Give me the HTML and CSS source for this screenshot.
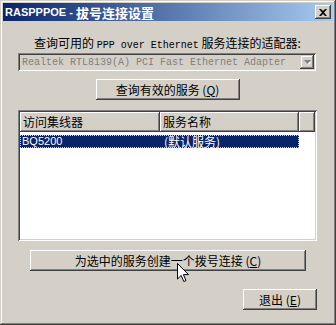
FILE: index.html
```html
<!DOCTYPE html>
<html>
<head>
<meta charset="utf-8">
<link rel="stylesheet" href="styles.css">
</head>
<body>
<div class="window">
  <div class="titlebar">
    <span class="title"><span class="t-latin">RASPPPOE - </span><span class="t-cjk">拔号连接设置</span></span>
    <span class="close"><svg width="8" height="7" viewBox="0 0 8 7"><path d="M0 0h2l2 2l2-2h2l-3 3.5l3 3.5h-2l-2-2l-2 2h-2l3-3.5z" fill="#000"/></svg></span>
  </div>
  <div class="content">
    <div class="label">查询可用的 <span class="mono">PPP over Ethernet</span> 服务连接的适配器:</div>
    <div class="combo">
      <span class="mono combo-text">Realtek RTL8139(A) PCI Fast Ethernet Adapter</span>
      <span class="drop"><svg width="7" height="5" viewBox="0 0 7 5"><path d="M1 1h5l-2.5 3z" fill="#fff" transform="translate(1 1)"/><path d="M0 0h7l-3.5 4z" fill="#808080"/></svg></span>
    </div>
    <div class="btn btn-query">查询有效的服务 (<u>Q</u>)</div>
    <div class="list">
      <div class="list-head">
        <div class="hcol c1">访问集线器</div>
        <div class="hcol c2">服务名称</div>
        <div class="hcol c3"></div>
      </div>
      <div class="row selected">
        <span class="cell c1">BQ5200</span>
        <span class="cell c2">(默认服务)</span>
      </div>
    </div>
    <div class="btn btn-create">为选中的服务创建一个拨号连接 (<u>C</u>)</div>
    <div class="footer"><div class="btn btn-exit">退出 (<u>E</u>)</div></div>
  </div>
  <svg class="cursor" width="12" height="20" viewBox="0 0 12 20"><path d="M0.5 0.5v15.5l3.7-3.6l2.6 6.1l2.2-0.9l-2.6-6h5.1z" fill="#fff" stroke="#000" stroke-width="1" stroke-linejoin="miter"/></svg>
</div>
</body>
</html>
```
FILE: styles.css
```css
html, body {
  margin: 0;
  padding: 0;
  background: #d4d0c8;
}
body {
  font-family: "Noto Sans CJK SC", "Liberation Sans", sans-serif;
  font-size: 12px;
  color: #000;
}
.window {
  position: relative;
  width: 336px;
  height: 325px;
  box-sizing: border-box;
  padding: 3px;
  background: #d4d0c8;
  box-shadow: inset -1px -1px #404040, inset 1px 1px #d4d0c8, inset -2px -2px #808080, inset 2px 2px #fff;
  overflow: hidden;
}
.titlebar {
  height: 18px;
  display: flex;
  align-items: center;
  justify-content: space-between;
  padding: 0 2px 0 2px;
  background: linear-gradient(to right, #0a246a, #a6caf0);
  color: #fff;
  font-weight: bold;
}
.title {
  display: flex;
  align-items: center;
  white-space: pre;
}
.t-latin {
  font-family: "Liberation Sans", sans-serif;
  font-size: 11px;
  font-weight: bold;
}
.t-cjk {
  font-family: "Noto Sans CJK SC", sans-serif;
  font-size: 13px;
  font-weight: bold;
}
.close {
  width: 16px;
  height: 14px;
  box-sizing: border-box;
  display: flex;
  align-items: center;
  justify-content: center;
  background: #d4d0c8;
  box-shadow: inset -1px -1px #404040, inset 1px 1px #fff, inset -2px -2px #808080, inset 2px 2px #d4d0c8;
}
.content {
  display: flex;
  flex-direction: column;
  padding: 0 16px 0 15px;
}
.mono {
  font-family: "Liberation Mono", monospace;
  font-size: 10px;
}
.label {
  margin-top: 15px;
  height: 14px;
  line-height: 14px;
  text-align: center;
  white-space: pre;
}
.combo {
  margin-top: 3px;
  height: 18px;
  width: 298px;
  box-sizing: border-box;
  display: flex;
  align-items: center;
  justify-content: space-between;
  padding: 2px 2px 2px 4px;
  box-shadow: inset 1px 1px #808080, inset -1px -1px #fff, inset 2px 2px #404040, inset -2px -2px #d4d0c8;
}
.combo-text {
  color: #808080;
  white-space: pre;
}
.drop {
  width: 14px;
  height: 14px;
  box-sizing: border-box;
  display: flex;
  align-items: center;
  justify-content: center;
  box-shadow: inset -1px -1px #404040, inset 1px 1px #d4d0c8, inset -2px -2px #808080, inset 2px 2px #fff;
}
.btn {
  height: 21px;
  box-sizing: border-box;
  display: flex;
  align-items: center;
  justify-content: center;
  white-space: pre;
  background: #d4d0c8;
  box-shadow: inset -1px -1px #404040, inset 1px 1px #fff, inset -2px -2px #808080, inset 2px 2px #d4d0c8;
}
.btn u {
  text-decoration: underline;
  text-underline-offset: 1px;
}
.btn-query {
  margin-top: 8px;
  width: 144px;
  align-self: center;
}
.list {
  margin-top: 10px;
  width: 299px;
  height: 131px;
  box-sizing: border-box;
  padding: 2px;
  background: #fff;
  box-shadow: inset 1px 1px #808080, inset -1px -1px #fff, inset 2px 2px #404040, inset -2px -2px #d4d0c8;
}
.list-head {
  display: flex;
  height: 20px;
}
.hcol {
  box-sizing: border-box;
  height: 20px;
  line-height: 19px;
  padding-left: 3px;
  background: #d4d0c8;
  box-shadow: inset -1px -1px #404040, inset 1px 1px #fff, inset -2px -2px #808080;
  font-size: 12px;
}
.hcol.c1 { width: 140px; }
.hcol.c2 { width: 139px; }
.hcol.c3 { flex: 1; }
.row {
  display: flex;
  height: 13px;
  margin-top: 3px;
  width: 279px;
  box-sizing: border-box;
  line-height: 13px;
  font-size: 12px;
}
.row.selected {
  background: #0a246a;
  color: #fff;
  outline: 1px dotted #d4d0c8;
  outline-offset: -1px;
}
.cell.c1 {
  width: 140px;
  padding-left: 2px;
  box-sizing: border-box;
  font-family: "Liberation Sans", sans-serif;
  font-size: 11px;
}
.cell.c2 {
  padding-left: 4px;
}
.btn-create {
  margin-top: 9px;
  width: 276px;
  margin-left: 12px;
}
.footer {
  display: flex;
  justify-content: flex-end;
  margin-top: 18px;
}
.btn-exit {
  width: 74px;
}
.cursor {
  position: absolute;
  left: 177px;
  top: 263px;
}
```
